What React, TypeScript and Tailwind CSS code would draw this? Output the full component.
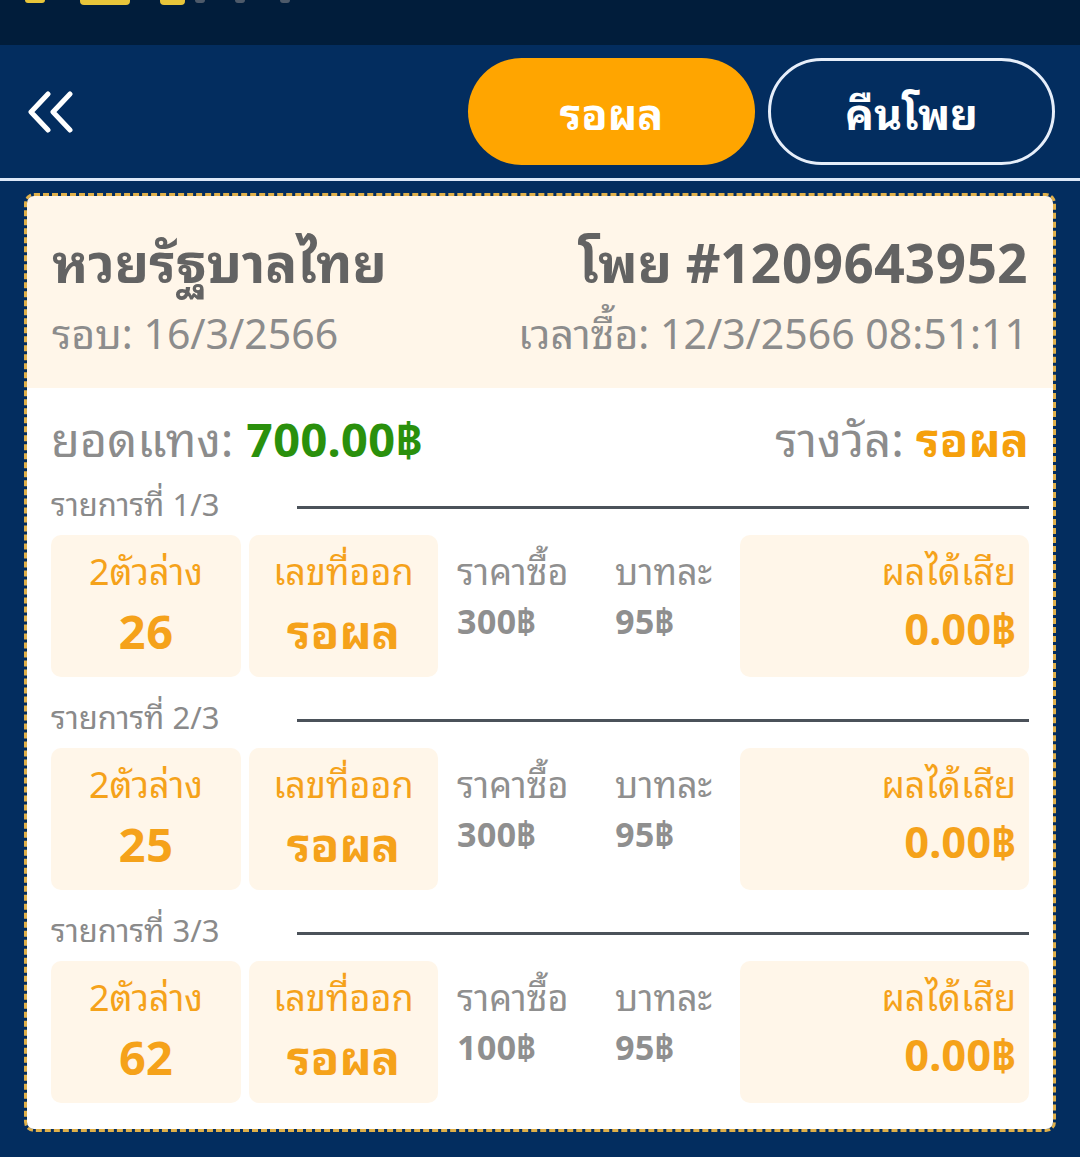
import React from "react";

const FONT = { fontFamily: '"Noto Sans Thai Looped", "Noto Sans Thai", "Noto Sans Thai UI", "Noto Sans", "DejaVu Sans", sans-serif' };

type Item = { idx: string; num: string; price: string };
const items: Item[] = [
  { idx: "1/3", num: "26", price: "300฿" },
  { idx: "2/3", num: "25", price: "300฿" },
  { idx: "3/3", num: "62", price: "100฿" },
];

function Back() {
  return (
    <svg width="48" height="42" viewBox="0 0 48 42" fill="none" stroke="white" strokeWidth="5" strokeLinecap="round" strokeLinejoin="round">
      <path d="M22 3 L5 21 L22 39" />
      <path d="M44 3 L27 21 L44 39" />
    </svg>
  );
}

function Section({ it }: { it: Item }) {
  return (
    <div className="flex flex-col">
      <div className="flex items-center h-[40px]">
        <span className="text-[31px] text-[#8a8a8a] w-[246px] leading-[30px] mb-[10px]">รายการที่ {it.idx}</span>
        <div className="flex-1 h-[3px] bg-[#4b525a]" />
      </div>
      <div className="flex mt-[8px] h-[142px]">
        <div className="w-[190px] rounded-[10px] bg-[#fff6e9] flex flex-col items-center">
          <span className="text-[36px] text-[#f5a21a] leading-[44px] mt-[12px]">2ตัวล่าง</span>
          <span className="text-[47px] font-bold text-[#f5a21a] leading-[54px] mt-[10px]">{it.num}</span>
        </div>
        <div className="w-[189px] ml-[8px] rounded-[10px] bg-[#fff6e9] flex flex-col items-center">
          <span className="text-[36px] text-[#f5a21a] leading-[44px] mt-[12px]">เลขที่ออก</span>
          <span className="text-[47px] font-bold text-[#f5a21a] leading-[54px] mt-[10px]">รอผล</span>
        </div>
        <div className="w-[177px] pl-[19px] flex flex-col">
          <span className="text-[36px] text-[#8f8f8f] leading-[44px] mt-[12px]">ราคาซื้อ</span>
          <span className="text-[34px] font-bold text-[#8f8f8f] leading-[40px] mt-[8px]">{it.price}</span>
        </div>
        <div className="w-[125px] flex flex-col">
          <span className="text-[36px] text-[#8f8f8f] leading-[44px] mt-[12px]">บาทละ</span>
          <span className="text-[34px] font-bold text-[#8f8f8f] leading-[40px] mt-[8px]">95฿</span>
        </div>
        <div className="flex-1 rounded-[10px] bg-[#fff6e9] flex flex-col items-end pr-[13px]">
          <span className="text-[36px] text-[#f5a21a] leading-[44px] mt-[12px]">ผลได้เสีย</span>
          <span className="text-[43px] font-bold text-[#f5a21a] leading-[50px] mt-[10px]">0.00฿</span>
        </div>
      </div>
    </div>
  );
}

export default function App() {
  return (
    <div style={FONT} className="w-[1080px] h-[1157px] bg-[#032d5f] flex flex-col overflow-hidden">
      <div className="h-[45px] bg-[#011d3b] flex items-start">
        <div className="flex items-start ml-[25px]">
          <div className="w-[20px] h-[3px] bg-[#e8c53a] rounded-b" />
          <div className="w-[50px] h-[5px] bg-[#e8c53a] rounded-b ml-[35px]" />
          <div className="w-[25px] h-[5px] bg-[#e8c53a] rounded-b ml-[30px]" />
          <div className="w-[10px] h-[3px] bg-[#4d5a6a] rounded-b ml-[10px]" />
          <div className="w-[10px] h-[3px] bg-[#4d5a6a] rounded-b ml-[30px]" />
          <div className="w-[10px] h-[3px] bg-[#4d5a6a] rounded-b ml-[35px]" />
        </div>
      </div>
      <div className="h-[133px] flex items-center pl-[26px] pr-[25px]">
        <Back />
        <div className="flex-1" />
        <div className="w-[287px] h-[107px] rounded-full bg-[#ffa500] flex items-center justify-center text-white text-[43px] font-bold leading-[50px] pb-[2px]">รอผล</div>
        <div className="w-[287px] h-[107px] ml-[13px] rounded-full border-[3px] border-[#e6eefa] flex items-center justify-center text-white text-[43px] font-bold leading-[50px] pb-[2px]">คืนโพย</div>
      </div>
      <div className="h-[3px] bg-[#dce8f8]" />
      <div className="mx-[24px] mt-[12px] rounded-[10px] border-[3px] border-dashed border-[#e0b04a] overflow-hidden">
        <div className="bg-[#fff6e9] h-[192px] px-[25px] flex flex-col pt-[31px]">
          <div className="flex justify-between items-center h-[66px]">
            <span className="text-[53px] font-bold text-[#636363] leading-[66px]">หวยรัฐบาลไทย</span>
            <span className="text-[53px] font-bold text-[#636363] leading-[66px]">โพย #1209643952</span>
          </div>
          <div className="flex justify-between items-center h-[52px] mt-[12px]">
            <span className="text-[41px] text-[#8c8c8c] leading-[52px]">รอบ: 16/3/2566</span>
            <span className="text-[41px] text-[#8c8c8c] leading-[52px]">เวลาซื้อ: 12/3/2566 08:51:11</span>
          </div>
        </div>
        <div className="bg-white px-[24px] pt-[20px] pb-[26px] flex flex-col">
          <div className="flex justify-between items-center h-[56px]">
            <span className="text-[47px] text-[#8c8c8c] leading-[56px]">ยอดแทง: <span className="font-bold text-[#2a900c]">700.00฿</span></span>
            <span className="text-[47px] text-[#8c8c8c] leading-[56px]">รางวัล: <span className="font-bold text-[#f5a00c]">รอผล</span></span>
          </div>
          <div className="mt-[23px] flex flex-col gap-[23px]">
            {items.map((it) => (
              <Section key={it.idx} it={it} />
            ))}
          </div>
        </div>
      </div>
    </div>
  );
}
